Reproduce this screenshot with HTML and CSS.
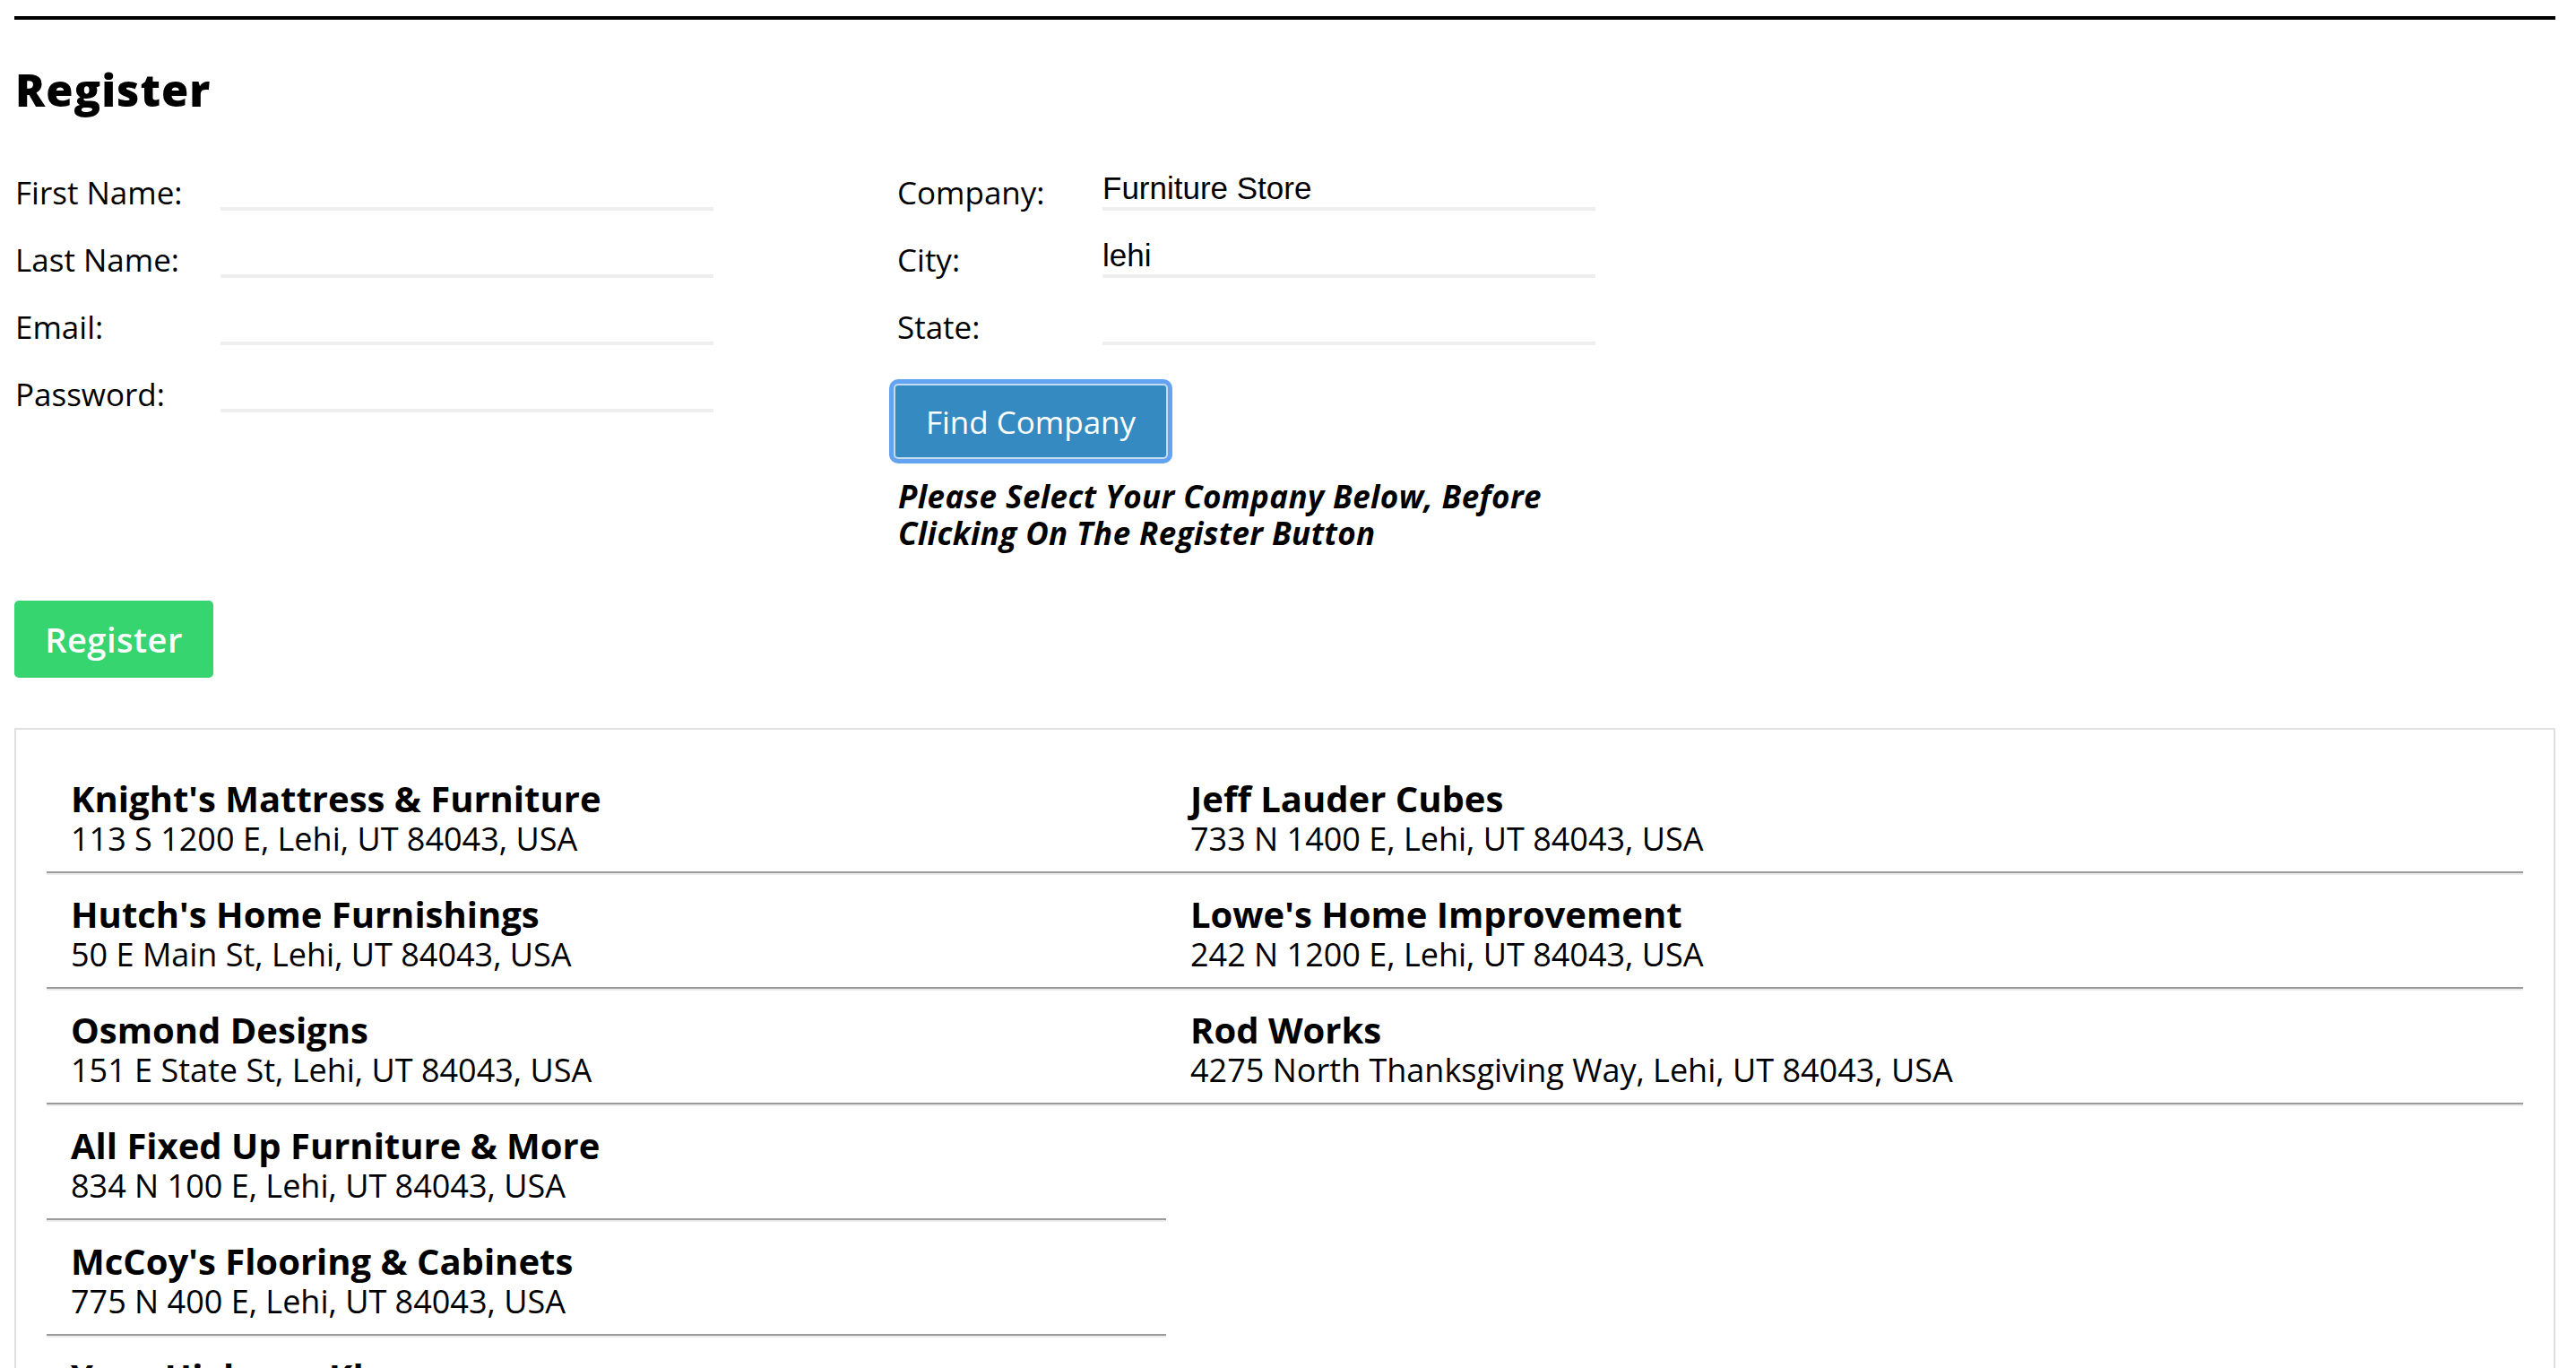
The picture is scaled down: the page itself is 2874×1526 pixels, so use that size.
FILE: index.html
```html
<!DOCTYPE html>
<html lang="en">
<head>
<meta charset="utf-8">
<title>Register</title>
<link rel="stylesheet" href="styles.css">
</head>
<body>
<div class="page">
  <div class="topline"></div>
  <h1 class="title">Register</h1>
  <div class="form">
    <div class="col">
      <div class="row"><label class="lbl">First Name:</label><input class="inp" type="text"></div>
      <div class="row"><label class="lbl">Last Name:</label><input class="inp" type="text"></div>
      <div class="row"><label class="lbl">Email:</label><input class="inp" type="email"></div>
      <div class="row"><label class="lbl">Password:</label><input class="inp" type="password"></div>
    </div>
    <div class="col">
      <div class="row"><label class="lbl">Company:</label><input class="inp" type="text" value="Furniture Store"></div>
      <div class="row"><label class="lbl">City:</label><input class="inp" type="text" value="lehi"></div>
      <div class="row"><label class="lbl">State:</label><input class="inp" type="text"></div>
      <button class="find" type="button">Find Company</button>
      <p class="note">Please Select Your Company Below, Before Clicking On The Register Button</p>
    </div>
  </div>
  <button class="register" type="button">Register</button>
  <div class="results">
    <div class="list">
      <div class="item"><div class="name">Knight's Mattress &amp; Furniture</div><div class="addr">113 S 1200 E, Lehi, UT 84043, USA</div></div>
      <div class="item"><div class="name">Hutch's Home Furnishings</div><div class="addr">50 E Main St, Lehi, UT 84043, USA</div></div>
      <div class="item"><div class="name">Osmond Designs</div><div class="addr">151 E State St, Lehi, UT 84043, USA</div></div>
      <div class="item"><div class="name">All Fixed Up Furniture &amp; More</div><div class="addr">834 N 100 E, Lehi, UT 84043, USA</div></div>
      <div class="item"><div class="name">McCoy's Flooring &amp; Cabinets</div><div class="addr">775 N 400 E, Lehi, UT 84043, USA</div></div>
      <div class="item"><div class="name">Your Highway Kleaners</div><div class="addr">Lehi, UT 84043, USA</div></div>
    </div>
    <div class="list">
      <div class="item"><div class="name">Jeff Lauder Cubes</div><div class="addr">733 N 1400 E, Lehi, UT 84043, USA</div></div>
      <div class="item"><div class="name">Lowe's Home Improvement</div><div class="addr">242 N 1200 E, Lehi, UT 84043, USA</div></div>
      <div class="item"><div class="name">Rod Works</div><div class="addr">4275 North Thanksgiving Way, Lehi, UT 84043, USA</div></div>
    </div>
  </div>
</div>
</body>
</html>
```

FILE: styles.css
```css
html, body {
  margin: 0;
  padding: 0;
  background: #fff;
}

body {
  font-family: "Open Sans", "Noto Sans", sans-serif;
  color: #000;
}

.page {
  margin: 0 23px 0 16px;
  padding-top: 18px;
}

.topline {
  border-top: 4px solid #000;
}

.title {
  margin: 52px 0 0 1px;
  font-size: 49px;
  line-height: 52px;
  font-weight: 800;
  letter-spacing: 1px;
}

.form {
  display: flex;
  margin-top: 34px;
}

.col {
  width: 984px;
  display: flex;
  flex-direction: column;
  align-items: flex-start;
}

.row {
  display: grid;
  grid-template-columns: 230px 550px;
  height: 75px;
  align-items: end;
}

.lbl {
  font-size: 35px;
  line-height: 40px;
  padding-bottom: 0;
  padding-left: 1px;
}

.inp {
  box-sizing: border-box;
  height: 46px;
  width: 550px;
  margin: 0;
  padding: 0;
  border: none;
  border-bottom: 4px solid #eeeeee;
  background: transparent;
  font-family: "Liberation Sans", "Inter", sans-serif;
  font-size: 35px;
  color: #000;
  outline: none;
}

.find {
  margin: 43px 0 0 -3px;
  width: 306px;
  height: 84px;
  box-sizing: border-box;
  background: #358bc1;
  color: #fff;
  border: 2px solid #c4dcef;
  border-radius: 5px;
  box-shadow: 0 0 0 5px #64a3f1;
  font-family: "Open Sans", "Noto Sans", sans-serif;
  font-size: 35px;
  padding: 0;
  cursor: pointer;
}

.note {
  margin: 21px 0 0 2px;
  width: 780px;
  font-size: 35px;
  line-height: 41px;
  font-style: italic;
  font-weight: 700;
  letter-spacing: 0.4px;
}

.register {
  display: block;
  margin-top: 55px;
  width: 222px;
  height: 86px;
  background: #37d56f;
  color: #fff;
  border: none;
  border-radius: 5px;
  font-family: "Open Sans", "Noto Sans", sans-serif;
  font-size: 38px;
  font-weight: 600;
  letter-spacing: 0.5px;
  padding: 0;
}

.results {
  margin-top: 56px;
  border: 2px solid #e0e0e0;
  border-bottom: none;
  padding: 31px 34px 0;
  display: grid;
  grid-template-columns: 1249px 1fr;
  align-items: start;
}

.item {
  padding: 24px 0 13px 27px;
  border-bottom: 2px solid #9b9b9b;
  box-shadow: 0 2px 0 #ececec;
}

.name {
  font-size: 40px;
  line-height: 44px;
  font-weight: 700;
}

.addr {
  font-size: 36px;
  line-height: 46px;
}
```
